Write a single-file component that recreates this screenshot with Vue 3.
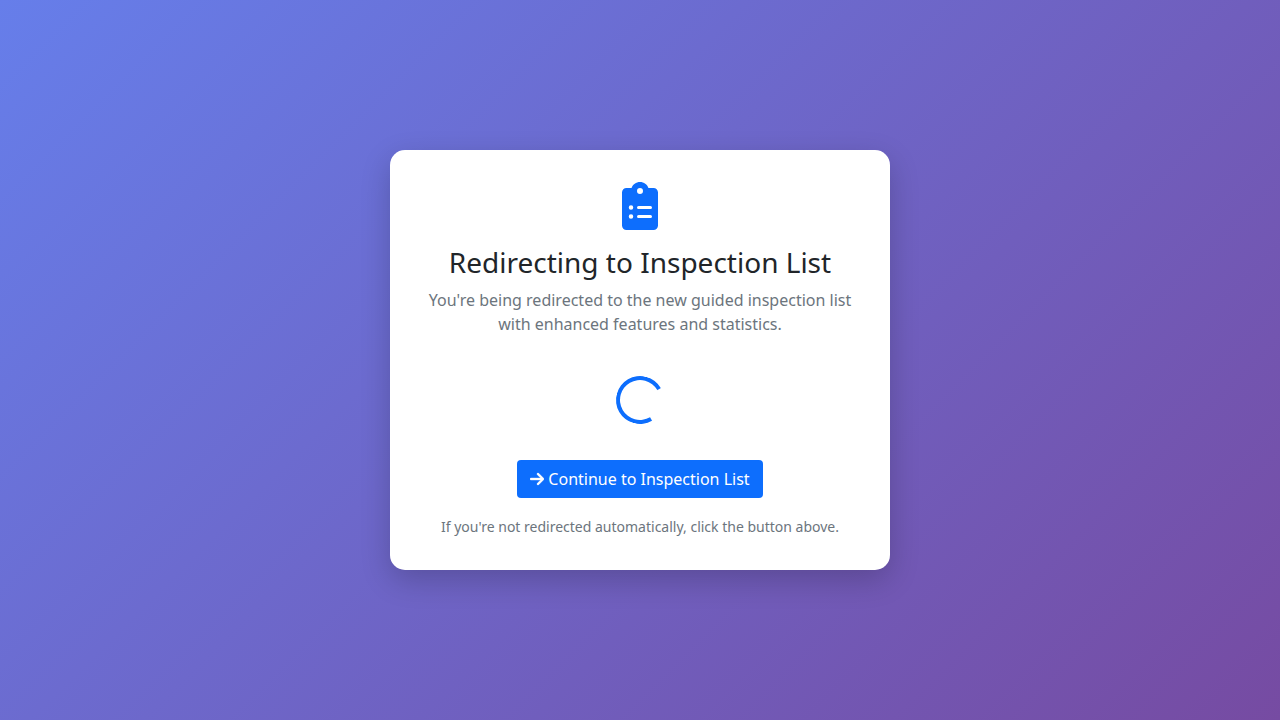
<script setup>
const target = '#inspection-list'
</script>

<template>
  <main class="page">
    <section class="card">
      <svg class="clipboard" viewBox="0 0 384 512" aria-hidden="true">
        <path d="M336 64h-53.900C268.900 26.800 233.700 0 192 0S115.100 26.800 101.900 64H48C21.500 64 0 85.500 0 112v352C0 490.500 21.500 512 48 512h288c26.500 0 48-21.500 48-48V112C384 85.500 362.500 64 336 64zM96 392a24 24 0 1 1 0-48 24 24 0 1 1 0 48zM96 296a24 24 0 1 1 0-48 24 24 0 1 1 0 48zM192 64a32 32 0 1 1 0 64 32 32 0 1 1 0-64zM304 384H176a16 16 0 1 1 0-32H304a16 16 0 1 1 0 32zM304 288H176a16 16 0 1 1 0-32H304a16 16 0 1 1 0 32z" />
      </svg>
      <h1>Redirecting to Inspection List</h1>
      <p>You're being redirected to the new guided inspection list with enhanced features and statistics.</p>
      <div class="spinner" role="status" aria-label="Loading"></div>
      <a class="button" :href="target">
        <svg class="arrow" viewBox="0 0 448 512" aria-hidden="true">
          <path d="M438.600 278.600c12.500-12.500 12.500-32.800 0-45.300l-160-160c-12.500-12.500-32.800-12.500-45.300 0s-12.500 32.800 0 45.300L338.800 224 32 224c-17.700 0-32 14.300-32 32s14.300 32 32 32l306.700 0L233.400 393.400c-12.500 12.500-12.500 32.800 0 45.300s32.800 12.500 45.300 0l160-160z" />
        </svg>
        Continue to Inspection List
      </a>
      <p class="hint">If you're not redirected automatically, click the button above.</p>
    </section>
  </main>
</template>

<style>
body {
  margin: 0;
}
</style>

<style scoped>
.page {
  box-sizing: border-box;
  min-height: 100vh;
  display: flex;
  align-items: center;
  justify-content: center;
  background: linear-gradient(135deg, #667eea 0%, #764ba2 100%);
  font-family: "Noto Sans", "Liberation Sans", sans-serif;
  font-size: 16px;
  line-height: 24px;
  color: #212529;
}

.card {
  box-sizing: border-box;
  width: 100%;
  max-width: 500px;
  padding: 32px;
  display: flex;
  flex-direction: column;
  align-items: center;
  text-align: center;
  background: #fff;
  border-radius: 15px;
  box-shadow: 0 10px 30px rgba(0, 0, 0, 0.2);
}

.clipboard {
  width: 36px;
  height: 48px;
  margin-bottom: 16px;
  fill: #0d6efd;
}

h1 {
  margin: 0 0 9px;
  font-size: 28px;
  font-weight: 400;
  line-height: 33px;
}

p {
  margin: 0;
  color: #6c757d;
}

.spinner {
  box-sizing: border-box;
  width: 48px;
  height: 48px;
  margin: 40px 0 36px;
  border: 4px solid #0d6efd;
  border-right-color: transparent;
  border-radius: 50%;
  transform: rotate(15deg);
}

.button {
  display: inline-flex;
  align-items: center;
  gap: 4px;
  padding: 7px 13px;
  border-radius: 4px;
  background: #0d6efd;
  color: #fff;
  text-decoration: none;
}

.arrow {
  width: 14px;
  height: 16px;
  fill: currentColor;
  stroke: currentColor;
  stroke-width: 12;
}

.hint {
  margin-top: 18px;
  font-size: 14px;
  line-height: 22px;
}
</style>
